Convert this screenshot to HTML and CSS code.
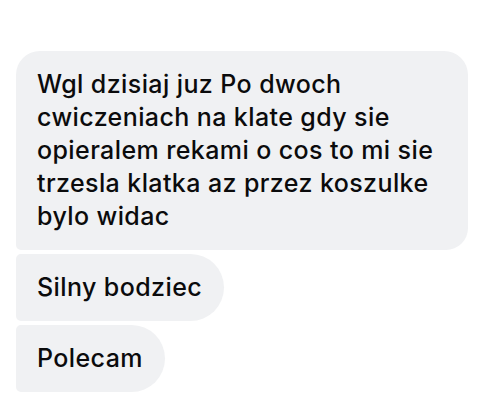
FILE: index.html
```html
<!DOCTYPE html>
<html lang="pl">
<head>
<meta charset="utf-8">
<link rel="stylesheet" href="styles.css">
</head>
<body>
<div class="thread">
  <div class="bubble bubble-first bubble-wide">Wgl dzisiaj juz Po dwoch<br>cwiczeniach na klate gdy sie<br>opieralem rekami o cos to mi sie<br>trzesla klatka az przez koszulke<br>bylo widac</div>
  <div class="bubble bubble-mid">Silny bodziec</div>
  <div class="bubble bubble-last">Polecam</div>
</div>
</body>
</html>
```
FILE: styles.css
```css
html, body {
  margin: 0;
  padding: 0;
  background: #ffffff;
}
.thread {
  display: flex;
  flex-direction: column;
  align-items: flex-start;
  gap: 4px;
  padding: 51px 0 0 16px;
}
.bubble {
  background: #f0f1f3;
  color: #0b0b0c;
  font-family: Inter, "Liberation Sans", sans-serif;
  font-size: 25px;
  font-weight: 500;
  letter-spacing: 0.4px;
  line-height: 33px;
  padding: 17px 22px 17px 21px;
  white-space: nowrap;
}
.bubble-wide {
  width: 452px;
  box-sizing: border-box;
}
.bubble-first {
  border-radius: 24px 24px 22px 5px;
}
.bubble-mid {
  border-radius: 5px 34px 34px 5px;
}
.bubble-last {
  border-radius: 5px 34px 34px 5px;
}
```
